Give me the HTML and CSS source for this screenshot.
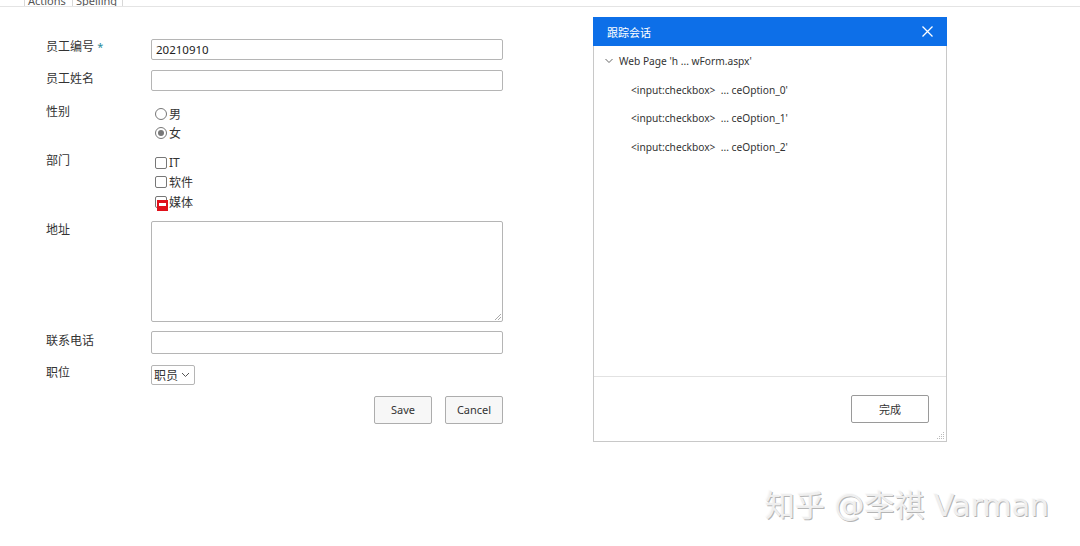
FILE: index.html
```html
<!DOCTYPE html>
<html>
<head>
<meta charset="utf-8">
<link rel="stylesheet" href="styles.css">
</head>
<body>
<div class="tabbar">
  <span class="tab">Actions</span><span class="tab">Spelling</span>
</div>
<div class="main">
  <form class="form">
    <div class="row r1">
      <label class="lbl">员工编号 <span class="req">*</span></label>
      <input class="txt" type="text" value="20210910">
    </div>
    <div class="row r2">
      <label class="lbl">员工姓名</label>
      <input class="txt" type="text">
    </div>
    <div class="row r3">
      <label class="lbl">性别</label>
      <div class="opts">
        <div class="opt"><span class="radio"></span>男</div>
        <div class="opt"><span class="radio on"></span>女</div>
      </div>
    </div>
    <div class="row r4">
      <label class="lbl">部门</label>
      <div class="opts chk">
        <div class="opt"><span class="box"></span>IT</div>
        <div class="opt"><span class="box"></span>软件</div>
        <div class="opt hl-wrap"><span class="box"></span>媒体<span class="hl"><span class="hl-in"></span></span></div>
      </div>
    </div>
    <div class="row r5">
      <label class="lbl">地址</label>
      <div class="area"><span class="grip"></span></div>
    </div>
    <div class="row r6">
      <label class="lbl">联系电话</label>
      <input class="txt tall" type="text">
    </div>
    <div class="row r7">
      <label class="lbl">职位</label>
      <div class="select">职员<svg width="9" height="6" viewBox="0 0 9 6"><path d="M1 1 L4.5 4.5 L8 1" fill="none" stroke="#555" stroke-width="1"/></svg></div>
    </div>
    <div class="btns">
      <span class="btn">Save</span>
      <span class="btn">Cancel</span>
    </div>
  </form>

  <div class="dialog">
    <div class="dhead">
      <span class="dtitle">跟踪会话</span>
      <svg class="close" width="11" height="11" viewBox="0 0 11 11"><path d="M0.5 0.5 L10.5 10.5 M10.5 0.5 L0.5 10.5" stroke="#fff" stroke-width="1.3"/></svg>
    </div>
    <div class="dbody">
      <div class="node root"><svg width="8" height="6" viewBox="0 0 8 6"><path d="M0.5 1 L4 4.5 L7.5 1" fill="none" stroke="#666" stroke-width="1"/></svg><span>Web Page 'h ... wForm.aspx'</span></div>
      <div class="node child">&lt;input:checkbox&gt;&nbsp; ... ceOption_0'</div>
      <div class="node child">&lt;input:checkbox&gt;&nbsp; ... ceOption_1'</div>
      <div class="node child">&lt;input:checkbox&gt;&nbsp; ... ceOption_2'</div>
    </div>
    <div class="dfoot">
      <span class="btn done">完成</span>
      <svg class="dgrip" width="9" height="9" viewBox="0 0 9 9"><g fill="#bbb"><rect x="7" y="1" width="1" height="1"/><rect x="5" y="3" width="1" height="1"/><rect x="7" y="3" width="1" height="1"/><rect x="3" y="5" width="1" height="1"/><rect x="5" y="5" width="1" height="1"/><rect x="7" y="5" width="1" height="1"/><rect x="1" y="7" width="1" height="1"/><rect x="3" y="7" width="1" height="1"/><rect x="5" y="7" width="1" height="1"/><rect x="7" y="7" width="1" height="1"/></g></svg>
    </div>
  </div>
</div>
<div class="watermark">知乎 @李祺 Varman</div>
</body>
</html>
```

FILE: styles.css
```css
html, body {
  margin: 0;
  padding: 0;
  background: #fff;
  width: 1080px;
  height: 546px;
  overflow: hidden;
  position: relative;
  font-family: "Noto Sans", "Noto Sans CJK SC", sans-serif;
  color: #333;
}

.tabbar {
  height: 6px;
  border-bottom: 1px solid #e4e4e4;
  padding-left: 24px;
  display: flex;
  overflow: hidden;
}
.tab {
  display: block;
  height: 6px;
  border-left: 1px solid #d8d8d8;
  font-size: 11px;
  line-height: 1px;
  padding: 0 4px 0 3px;
  color: #555;
  width: 40px;
}
.tab + .tab {
  width: 42px;
  border-right: 1px solid #d8d8d8;
}

.main {
  display: flex;
  align-items: flex-start;
}

.form {
  margin: 32px 0 0 46px;
  width: 457px;
  font-size: 12px;
}

.row {
  display: flex;
  align-items: flex-start;
}
.lbl {
  width: 105px;
  flex: none;
  line-height: 16px;
  font-size: 12px;
  color: #333;
}
.req {
  color: #2a8a9a;
  font-size: 11px;
}

.txt {
  box-sizing: border-box;
  width: 352px;
  height: 21px;
  margin: 0;
  border: 1px solid #b5b5b5;
  border-radius: 2px;
  padding: 0 4px;
  font-family: "Noto Sans", "Noto Sans CJK SC", sans-serif;
  font-size: 11.5px;
  color: #222;
  outline: none;
  background: #fff;
}
.txt.tall { height: 23px; }

.r1 { margin-bottom: 10px; }
.r2 { margin-bottom: 13px; }
.r2 .lbl { padding-top: 1px; }
.r3 { margin-bottom: 11px; }
.r4 { margin-bottom: 9px; }
.r5 { margin-bottom: 9px; }
.r5 .lbl { padding-top: 1px; }
.r6 { margin-bottom: 11px; }
.r6 .lbl { padding-top: 2px; }
.r7 { margin-bottom: 11px; }

.opts {
  padding-left: 4px;
}
.opt {
  display: flex;
  align-items: center;
  height: 19px;
  font-size: 12px;
  color: #333;
}
.chk .opt { height: 19.5px; }
.radio {
  box-sizing: border-box;
  width: 12px;
  height: 12px;
  border: 1px solid #777;
  border-radius: 50%;
  margin-right: 2px;
  position: relative;
}
.radio.on::after {
  content: "";
  position: absolute;
  left: 2px;
  top: 2px;
  width: 6px;
  height: 6px;
  border-radius: 50%;
  background: #777;
}
.box {
  box-sizing: border-box;
  width: 12px;
  height: 12px;
  border: 1px solid #777;
  border-radius: 2px;
  margin-right: 2px;
}
.hl-wrap { position: relative; }
.hl {
  position: absolute;
  left: 2px;
  top: 8px;
  width: 11px;
  height: 11px;
  background: #e0101a;
  box-sizing: border-box;
}
.hl-in {
  position: absolute;
  left: 2px;
  top: 3px;
  width: 7px;
  height: 3px;
  background: #fff;
}

.area {
  box-sizing: border-box;
  width: 352px;
  height: 101px;
  border: 1px solid #b5b5b5;
  border-radius: 2px;
  position: relative;
}
.grip {
  position: absolute;
  right: 1px;
  bottom: 1px;
  width: 6px;
  height: 6px;
  background: linear-gradient(135deg, transparent 45%, #aaa 45%, #aaa 55%, transparent 55%, transparent 72%, #aaa 72%, #aaa 82%, transparent 82%);
}

.select {
  box-sizing: border-box;
  height: 20px;
  width: 44px;
  border: 1px solid #b5b5b5;
  border-radius: 2px;
  display: flex;
  align-items: center;
  padding-left: 2px;
  gap: 3px;
  font-size: 12px;
  color: #333;
}

.btns {
  display: flex;
  justify-content: flex-end;
  gap: 13px;
  width: 457px;
}
.btn {
  box-sizing: border-box;
  display: flex;
  align-items: center;
  justify-content: center;
  width: 58px;
  height: 28px;
  border: 1px solid #adadad;
  border-radius: 2px;
  background: #f7f7f7;
  font-size: 11px;
  color: #333;
}

.dialog {
  box-sizing: border-box;
  margin: 10px 0 0 90px;
  width: 354px;
  height: 425px;
  border: 1px solid #c8c8c8;
  display: flex;
  flex-direction: column;
  background: #fff;
}
.dhead {
  height: 29px;
  background: #0d6fe8;
  display: flex;
  align-items: center;
  justify-content: space-between;
  padding: 0 14px 0 14px;
  margin: -1px -1px 0 -1px;
}
.dtitle {
  color: #fff;
  font-size: 11px;
}
.dbody {
  flex: 1;
  padding-top: 1px;
  border-bottom: 1px solid #e2e2e2;
}
.node {
  height: 28.5px;
  display: flex;
  align-items: center;
  font-size: 10.2px;
  color: #333;
}
.node.root {
  padding-left: 11px;
  gap: 6px;
}
.node.child {
  padding-left: 37px;
}
.dfoot {
  height: 64px;
  position: relative;
  display: flex;
  justify-content: flex-end;
  align-items: flex-start;
  padding: 18px 17px 0 0;
  box-sizing: border-box;
}
.btn.done {
  width: 78px;
  height: 28px;
  background: #fff;
  border-color: #9a9a9a;
  font-size: 11px;
}
.dgrip {
  position: absolute;
  right: 1px;
  bottom: 1px;
}

.watermark {
  position: absolute;
  left: 765px;
  top: 481px;
  font-family: "DejaVu Sans", "Noto Sans CJK SC", sans-serif;
  font-size: 30px;
  letter-spacing: 0;
  color: #efefef;
  text-shadow: 1px 1px 0 #b5b5b5, -1px -1px 0 #fafafa;
  white-space: nowrap;
}
```
